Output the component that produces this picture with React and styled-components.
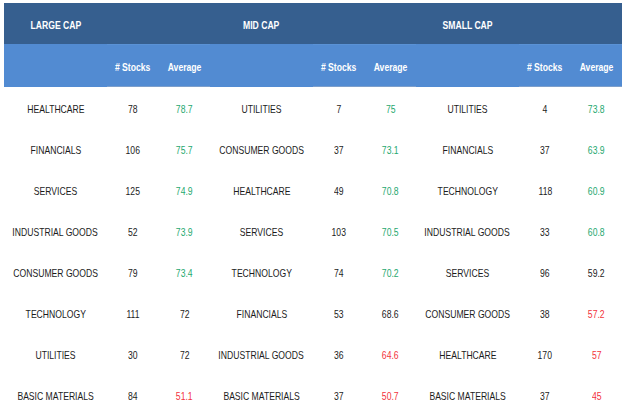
import React from "react";
import styled, { createGlobalStyle } from "styled-components";

const Global = createGlobalStyle`
  html, body { margin: 0; padding: 0; background: #fff; }
  body { font-family: "Liberation Sans", Arial, sans-serif; }
`;

const Page = styled.div`
  padding: 3px 2px 0 4px;
`;

const Grid = styled.div`
  display: grid;
  width: 618px;
  grid-template-columns: repeat(3, 103px 52px 51px);
`;

const Narrow = styled.span`
  display: inline-block;
  white-space: nowrap;
  transform: scaleX(0.82);
  transform-origin: center;
`;

const TopCell = styled.div`
  box-sizing: border-box;
  height: 41px;
  padding-top: 2px;
  background: #365f8f;
  color: #fff;
  font-weight: bold;
  font-size: 10.5px;
  display: flex;
  align-items: center;
  justify-content: center;
`;

const SubCell = styled.div`
  height: 43px;
  background: #528bd2;
  color: #fff;
  font-weight: bold;
  font-size: 10.5px;
  display: flex;
  align-items: center;
  justify-content: center;
  box-sizing: border-box;
  padding-top: 2px;
  border-top: 1px solid ${(p) => (p.$num ? "#5a92d6" : "#528bd2")};
  border-bottom: 1px solid ${(p) => (p.$num ? "#7d9fcb" : "#528bd2")};
`;

const Cell = styled.div`
  box-sizing: border-box;
  height: 41px;
  padding-top: 2px;
  font-size: 10.5px;
  display: flex;
  align-items: center;
  justify-content: center;
  color: ${(p) =>
    p.$tone === "up" ? "#26a86f" : p.$tone === "down" ? "#f3333b" : "#1c1c1c"};
`;

const groups = [
  {
    title: "LARGE CAP",
    rows: [
      ["HEALTHCARE", "78", "78.7", "up"],
      ["FINANCIALS", "106", "75.7", "up"],
      ["SERVICES", "125", "74.9", "up"],
      ["INDUSTRIAL GOODS", "52", "73.9", "up"],
      ["CONSUMER GOODS", "79", "73.4", "up"],
      ["TECHNOLOGY", "111", "72", ""],
      ["UTILITIES", "30", "72", ""],
      ["BASIC MATERIALS", "84", "51.1", "down"],
    ],
  },
  {
    title: "MID CAP",
    rows: [
      ["UTILITIES", "7", "75", "up"],
      ["CONSUMER GOODS", "37", "73.1", "up"],
      ["HEALTHCARE", "49", "70.8", "up"],
      ["SERVICES", "103", "70.5", "up"],
      ["TECHNOLOGY", "74", "70.2", "up"],
      ["FINANCIALS", "53", "68.6", ""],
      ["INDUSTRIAL GOODS", "36", "64.6", "down"],
      ["BASIC MATERIALS", "37", "50.7", "down"],
    ],
  },
  {
    title: "SMALL CAP",
    rows: [
      ["UTILITIES", "4", "73.8", "up"],
      ["FINANCIALS", "37", "63.9", "up"],
      ["TECHNOLOGY", "118", "60.9", "up"],
      ["INDUSTRIAL GOODS", "33", "60.8", "up"],
      ["SERVICES", "96", "59.2", ""],
      ["CONSUMER GOODS", "38", "57.2", "down"],
      ["HEALTHCARE", "170", "57", "down"],
      ["BASIC MATERIALS", "37", "45", "down"],
    ],
  },
];

export default function App() {
  return (
    <Page>
      <Global />
      <Grid>
        {groups.map((g) => (
          <React.Fragment key={g.title}>
            <TopCell>
              <Narrow>{g.title}</Narrow>
            </TopCell>
            <TopCell />
            <TopCell />
          </React.Fragment>
        ))}
        {groups.map((g) => (
          <React.Fragment key={g.title + "-sub"}>
            <SubCell />
            <SubCell $num>
              <Narrow># Stocks</Narrow>
            </SubCell>
            <SubCell $num>
              <Narrow>Average</Narrow>
            </SubCell>
          </React.Fragment>
        ))}
        {[0, 1, 2, 3, 4, 5, 6, 7].map((i) =>
          groups.map((g) => {
            const [name, count, avg, tone] = g.rows[i];
            return (
              <React.Fragment key={g.title + i}>
                <Cell>
                  <Narrow>{name}</Narrow>
                </Cell>
                <Cell>
                  <Narrow>{count}</Narrow>
                </Cell>
                <Cell $tone={tone}>
                  <Narrow>{avg}</Narrow>
                </Cell>
              </React.Fragment>
            );
          })
        )}
      </Grid>
    </Page>
  );
}
